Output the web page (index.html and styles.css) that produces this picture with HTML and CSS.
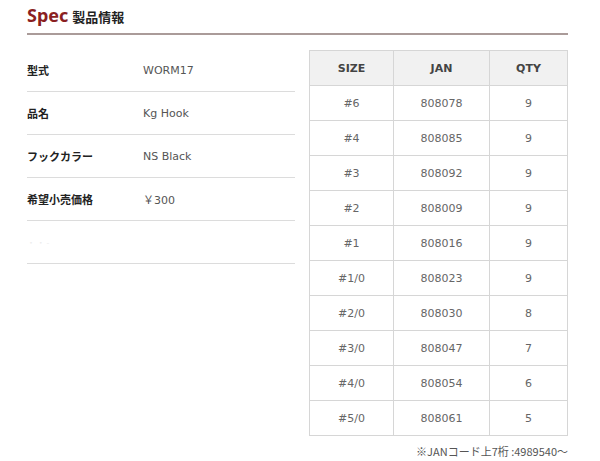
FILE: index.html
```html
<!DOCTYPE html>
<html lang="ja">
<head>
<meta charset="utf-8">
<title>Spec 製品情報</title>
<link rel="stylesheet" href="styles.css">
</head>
<body>
<div class="page">
  <div class="head">
    <span class="head-en">Spec</span>
    <span class="head-ja">製品情報</span>
  </div>
  <div class="main">
    <div class="info">
      <div class="info-row"><div class="info-label">型式</div><div class="info-value">WORM17</div></div>
      <div class="info-row"><div class="info-label">品名</div><div class="info-value">Kg Hook</div></div>
      <div class="info-row"><div class="info-label">フックカラー</div><div class="info-value">NS Black</div></div>
      <div class="info-row"><div class="info-label">希望小売価格</div><div class="info-value">￥300</div></div>
      <div class="info-row"><div class="info-label faint">・ ・ -</div><div class="info-value"></div></div>
    </div>
    <div class="side">
      <table class="size-table">
        <thead>
          <tr><th>SIZE</th><th>JAN</th><th>QTY</th></tr>
        </thead>
        <tbody>
          <tr><td>#6</td><td>808078</td><td>9</td></tr>
          <tr><td>#4</td><td>808085</td><td>9</td></tr>
          <tr><td>#3</td><td>808092</td><td>9</td></tr>
          <tr><td>#2</td><td>808009</td><td>9</td></tr>
          <tr><td>#1</td><td>808016</td><td>9</td></tr>
          <tr><td>#1/0</td><td>808023</td><td>9</td></tr>
          <tr><td>#2/0</td><td>808030</td><td>8</td></tr>
          <tr><td>#3/0</td><td>808047</td><td>7</td></tr>
          <tr><td>#4/0</td><td>808054</td><td>6</td></tr>
          <tr><td>#5/0</td><td>808061</td><td>5</td></tr>
        </tbody>
      </table>
      <div class="note">※JANコード上7桁 :4989540～</div>
    </div>
  </div>
</div>
</body>
</html>
```
FILE: styles.css
```css
html, body {
  margin: 0;
  padding: 0;
  background: #fff;
}
body {
  font-family: "DejaVu Sans", "Noto Sans CJK JP", sans-serif;
  color: #555;
}
.page {
  width: 541px;
  padding: 0 0 0 27px;
}
.head {
  display: flex;
  align-items: baseline;
  gap: 4px;
  padding-top: 4px;
  height: 35px;
  box-sizing: border-box;
  border-bottom: 2px solid #aa9b99;
}
.head-en {
  font-family: "Noto Sans", sans-serif;
  font-weight: 700;
  font-size: 18px;
  line-height: 22px;
  color: #8a1f22;
}
.head-ja {
  font-family: "Noto Sans CJK JP", sans-serif;
  font-weight: 700;
  font-size: 13px;
  color: #222;
}
.main {
  display: flex;
  gap: 14px;
  margin-top: 14px;
}
.info {
  width: 268px;
  flex: none;
}
.info-row {
  display: flex;
  align-items: center;
  height: 43px;
  box-sizing: border-box;
  border-bottom: 1px solid #dcdcdc;
}
.info-label {
  width: 116px;
  font-family: "Noto Sans CJK JP", sans-serif;
  font-weight: 700;
  font-size: 11px;
  color: #222;
}
.info-label.faint {
  color: #ececec;
  font-weight: 400;
  font-size: 8px;
}
.info-value {
  font-size: 11px;
  color: #555;
}
.side {
  flex: none;
  width: 259px;
  margin-top: 1px;
  display: flex;
  flex-direction: column;
}
.size-table {
  border-collapse: collapse;
  width: 259px;
  table-layout: fixed;
}
.size-table th,
.size-table td {
  border: 1px solid #d6d6d6;
  text-align: center;
  height: 34px;
  padding: 0;
  font-size: 11px;
}
.size-table th {
  background: #f1f1f1;
  font-weight: 700;
  color: #444;
}
.size-table th:nth-child(1) { width: 83px; }
.size-table th:nth-child(2) { width: 95px; }
.size-table td {
  color: #666;
}
.note {
  margin-top: 7px;
  text-align: right;
  font-family: "Noto Sans CJK JP", sans-serif;
  font-size: 11px;
  line-height: 16px;
  color: #555;
}
```
